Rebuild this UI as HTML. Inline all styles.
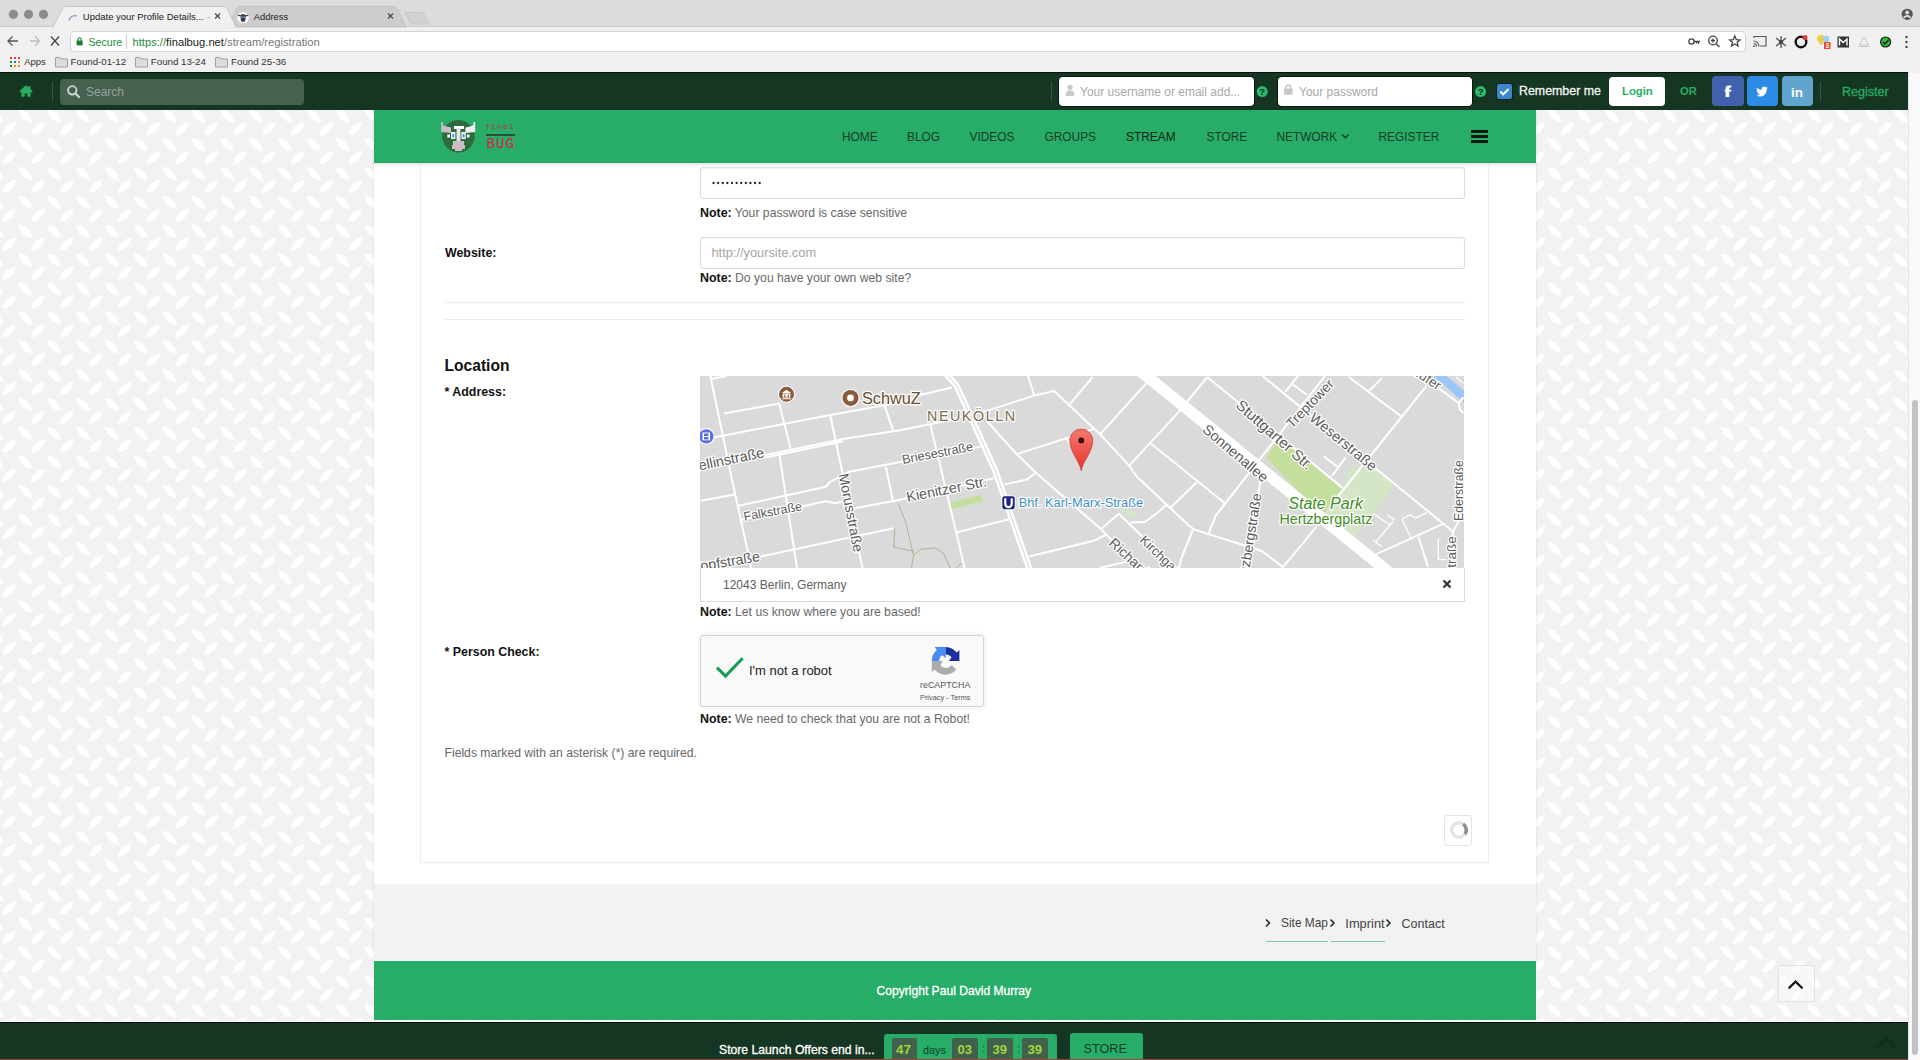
<!DOCTYPE html>
<html><head><meta charset="utf-8">
<style>
*{box-sizing:border-box;margin:0;padding:0}
html,body{width:1920px;height:1060px;overflow:hidden;background:#f2f2f2;font-family:"Liberation Sans",sans-serif}
.a{position:absolute}
.m{-webkit-text-stroke:0.3px currentColor}
.t{position:absolute;white-space:nowrap;line-height:1;transform:translateY(1.2px)}
</style></head><body>
<!-- background pattern -->
<svg class="a" style="left:0;top:0" width="1908" height="1060">
<defs>
<pattern id="pt" x="0" y="0" width="28.852" height="28.87" patternUnits="userSpaceOnUse">
<g fill="#fff">
<path id="lf1" d="M-9.7 0 Q0 -7 9.7 0 Q0 7 -9.7 0Z" transform="translate(9.2 13.2) rotate(-44)"/>
<path d="M-9.7 0 Q0 -7 9.7 0 Q0 7 -9.7 0Z" transform="translate(25.3 0.35) rotate(44)"/>
<path d="M-9.7 0 Q0 -7 9.7 0 Q0 7 -9.7 0Z" transform="translate(25.3 29.22) rotate(44)"/>
<path d="M-9.7 0 Q0 -7 9.7 0 Q0 7 -9.7 0Z" transform="translate(-3.552 0.35) rotate(44)"/>
<path d="M-9.7 0 Q0 -7 9.7 0 Q0 7 -9.7 0Z" transform="translate(-3.552 29.22) rotate(44)"/>
<path d="M-9.7 0 Q0 -7 9.7 0 Q0 7 -9.7 0Z" transform="translate(38.052 13.2) rotate(-44)"/>
</g>
</pattern>
</defs>
<rect width="1908" height="1060" fill="#f2f2f2"/>
<rect width="1908" height="1060" fill="url(#pt)"/>
</svg>

<!-- ===== Browser chrome ===== -->
<div class="a" style="left:0;top:0;width:1920px;height:27px;background:#dcdcdc"></div>
<div class="a" style="left:0;top:27px;width:1920px;height:46px;background:#f0f0f0"></div>
<div class="a" style="left:0;top:26px;width:1920px;height:1px;background:#c8c8c8"></div>
<svg class="a" style="left:0;top:0" width="440" height="28">
<circle cx="13.4" cy="14.3" r="4.6" fill="#8c8c8c"/>
<circle cx="28.5" cy="14.3" r="4.6" fill="#8c8c8c"/>
<circle cx="43.5" cy="14.3" r="4.6" fill="#8c8c8c"/>
<path d="M228 27 L237 8.5 Q238 6.5 240 6.5 L394 6.5 Q396 6.5 397 8.5 L406.5 27Z" fill="#cdcdcd" stroke="#bdbdbd" stroke-width="0.8"/>
<path d="M53 27.5 L62.5 8.5 Q63.5 6.5 65.5 6.5 L224 6.5 Q226 6.5 227 8.5 L236 27.5Z" fill="#f0f0f0"/><path d="M53 27 L62.5 8.5 Q63.5 6.5 65.5 6.5 L224 6.5 Q226 6.5 227 8.5 L236 27" fill="none" stroke="#c0c0c0" stroke-width="0.8"/>
<path d="M405 12.5 L423 12.5 L429 24 L411 24Z" fill="#d2d2d2" stroke="#c2c2c2" stroke-width="0.8"/>
<path d="M69 20.5 A6 6 0 0 1 77 16" fill="none" stroke="#8da0c0" stroke-width="1.4"/>
<path d="M215 13.5 L220 18.5 M220 13.5 L215 18.5" stroke="#444" stroke-width="1.1"/>
<path d="M388 13.5 L393 18.5 M393 13.5 L388 18.5" stroke="#444" stroke-width="1.1"/>
<circle cx="243.1" cy="17.7" r="5.6" fill="#fff"/><path d="M237.8 14.4 L240.5 15.3 L241.5 14.2 H244.7 L245.7 15.3 L248.4 14.4 L248 16 L245.6 16.6 L245.5 20 L244.6 21.8 H241.6 L240.7 20 L240.6 16.6 L238.2 16Z" fill="#3a3d42"/><circle cx="241.9" cy="17.2" r="0.9" fill="#6a90d8"/><circle cx="244.3" cy="17.2" r="0.9" fill="#6a90d8"/>
</svg>
<div class="t" style="left:82.8px;top:11.2px;font-size:9.5px;color:#222">Update your Profile Details...</div>
<div class="t" style="left:207px;top:11px;font-size:9.5px;color:#aaa">-</div>
<div class="t" style="left:253.8px;top:11.4px;font-size:9.4px;color:#222">Address</div>

<!-- toolbar -->
<svg class="a" style="left:0;top:27px" width="75" height="26">
<path d="M8 14 L18 14 M12.5 9.5 L8 14 L12.5 18.5" fill="none" stroke="#555" stroke-width="1.3"/>
<path d="M30 14 L39 14 M35 9.5 L39.5 14 L35 18.5" fill="none" stroke="#bbb" stroke-width="1.3"/>
<path d="M51 9.5 L59 18.5 M59 9.5 L51 18.5" fill="none" stroke="#444" stroke-width="1.3"/>
</svg>
<div class="a" style="left:70px;top:31px;width:1676px;height:21px;background:#fff;border:1px solid #d6d6d6;border-radius:4px"></div>
<svg class="a" style="left:1680px;top:30px" width="240" height="24">
<circle cx="1901" cy="-16" r="0" />
<g fill="none" stroke="#444" stroke-width="1.3">
<circle cx="11.5" cy="11.5" r="2.6"/><path d="M14 11.5 H20 M18.5 11.5 V14 M16.5 11.5 V13.5"/>
<circle cx="33" cy="10.5" r="4.3"/><path d="M36.2 13.7 L39.5 17 M31 10.5 H35 M33 8.5 V12.5"/>
<path d="M54.8 6 L56.3 9.6 L60 9.9 L57.2 12.3 L58.1 16 L54.8 14 L51.5 16 L52.4 12.3 L49.6 9.9 L53.3 9.6Z"/>
</g>
<g fill="none" stroke="#555" stroke-width="1.2"><path d="M74 8 V6.5 H86 V16 H80"/><path d="M73.5 11 A5.5 5.5 0 0 1 79 16.5 M73.5 13.5 A3 3 0 0 1 76.5 16.5"/></g>
<circle cx="74" cy="16.2" r="0.9" fill="#555"/>
<g stroke="#555" stroke-width="1.3"><path d="M96 8 L106 16 M106 8 L96 16 M101 6 V18"/></g><circle cx="101" cy="12" r="2.2" fill="#444"/>
<circle cx="121" cy="12" r="5.3" fill="none" stroke="#111" stroke-width="2.4"/><circle cx="125" cy="7.5" r="2.5" fill="#e23b3b"/>
<path d="M139 5.5 A4 4 0 0 1 145 10 Q143 12 143 14.5 H139.5 Q139.5 12 137 10 A4 4 0 0 1 139 5.5Z" fill="#f0d040"/><circle cx="146" cy="9" r="3.3" fill="#9fd0f0"/>
<rect x="144" y="12" width="6.5" height="7" fill="#e84a2a"/><text x="147.2" y="18.3" font-size="6.5" font-family="Liberation Sans" font-weight="bold" fill="#fff" text-anchor="middle">3</text>
<rect x="157.5" y="6.5" width="11.5" height="11" fill="#333"/><path d="M159.5 15.5 V9 L163.2 12.5 L167 9 V15.5" fill="none" stroke="#fff" stroke-width="1.4"/>
<path d="M184 7 L188.5 15 H179.5Z M178 16.5 H190" fill="none" stroke="#c8c8c8" stroke-width="1"/>
<circle cx="205.6" cy="12" r="5.6" fill="#1a1a1a"/><circle cx="205.6" cy="12" r="4.4" fill="#2fbf3a"/><path d="M203 12 L205 14 L208.5 10" fill="none" stroke="#111" stroke-width="1.3"/>
<circle cx="226.5" cy="7" r="1.2" fill="#444"/><circle cx="226.5" cy="12" r="1.2" fill="#444"/><circle cx="226.5" cy="17" r="1.2" fill="#444"/>
</svg>
<svg class="a" style="left:1895px;top:8px" width="22" height="14"><circle cx="12.2" cy="6.3" r="5.6" fill="#555"/><circle cx="12.2" cy="4.6" r="2" fill="#dcdcdc"/><path d="M8.6 9.8 Q12.2 6.3 15.8 9.8" fill="none" stroke="#dcdcdc" stroke-width="1.8"/></svg>
<svg class="a" style="left:75px;top:36px" width="10" height="11"><rect x="1.6" y="4.6" width="6" height="4.8" fill="#1a7f2e"/><path d="M3 5 V3.4 A1.6 1.6 0 0 1 6.2 3.4 V5" fill="none" stroke="#1a7f2e" stroke-width="1.1"/></svg>
<div class="t" style="left:88.5px;top:36px;font-size:10.6px;color:#1e8a3a">Secure</div>
<div class="a" style="left:126px;top:34px;width:1px;height:15px;background:#ccc"></div>
<div class="t" style="left:132.5px;top:36px;font-size:11.2px;color:#777"><span style="color:#1e8a3a">https://</span><span style="color:#222">finalbug.net</span>/stream/registration</div>

<!-- bookmarks -->

<svg class="a" style="left:9px;top:56px" width="12" height="12">
<g><rect x="1" y="1" width="2" height="2" fill="#e53935"/><rect x="5" y="1" width="2" height="2" fill="#e53935"/><rect x="9" y="1" width="2" height="2" fill="#e53935"/>
<rect x="1" y="5" width="2" height="2" fill="#2e7d32"/><rect x="5" y="5" width="2" height="2" fill="#1e6fe0"/><rect x="9" y="5" width="2" height="2" fill="#ef8c1a"/>
<rect x="1" y="9" width="2" height="2" fill="#2e7d32"/><rect x="5" y="9" width="2" height="2" fill="#ef8c1a"/><rect x="9" y="9" width="2" height="2" fill="#ef8c1a"/></g></svg>
<div class="t" style="left:24.2px;top:56px;font-size:9.5px;color:#333">Apps</div>
<svg class="a" style="left:55px;top:56px" width="14" height="12"><path d="M0.5 1.5 H5 L6 3 H12.5 V11 H0.5Z" fill="#dcdcdc" stroke="#9a9a9a" stroke-width="0.9"/></svg>
<div class="t" style="left:70.6px;top:56px;font-size:9.7px;color:#333">Found-01-12</div>
<svg class="a" style="left:135px;top:56px" width="14" height="12"><path d="M0.5 1.5 H5 L6 3 H12.5 V11 H0.5Z" fill="#dcdcdc" stroke="#9a9a9a" stroke-width="0.9"/></svg>
<div class="t" style="left:150.8px;top:56px;font-size:9.73px;color:#333">Found 13-24</div>
<svg class="a" style="left:215px;top:56px" width="14" height="12"><path d="M0.5 1.5 H5 L6 3 H12.5 V11 H0.5Z" fill="#dcdcdc" stroke="#9a9a9a" stroke-width="0.9"/></svg>
<div class="t" style="left:231px;top:56px;font-size:9.75px;color:#333">Found 25-36</div>

<!-- ===== Top dark bar ===== -->
<div class="a" style="left:0;top:72px;width:1908px;height:38px;background:#163624;border-top:1px solid #051208"></div>

<!-- ===== Container ===== -->
<div class="a" style="left:374px;top:110px;width:1162px;height:53px;background:#27ad67;box-shadow:0 0 2px 1px rgba(0,0,0,0.06)"></div>
<div class="a" style="left:374px;top:163px;width:1162px;height:722px;background:#fff;box-shadow:0 0 2px 1px rgba(0,0,0,0.06)"></div>
<div class="a" style="left:420px;top:163px;width:1069px;height:700px;border:1px solid #ececec;border-top:none"></div>
<div class="a" style="left:374px;top:885px;width:1162px;height:76px;background:#f2f2f2;box-shadow:0 0 2px 1px rgba(0,0,0,0.06)"></div>
<div class="a" style="left:374px;top:961px;width:1162px;height:59px;background:#27ad67"></div>


<!-- top bar contents -->
<svg class="a" style="left:18px;top:84px" width="16" height="14"><path d="M8 1.2 L1.2 7.2 L2.6 8.4 L3.4 7.8 V12.8 H6.6 V9.6 H9.4 V12.8 H12.6 V7.8 L13.4 8.4 L14.8 7.2 L12.4 5.1 V2 H10.6 V3.5Z" fill="#27ae60"/></svg>
<div class="a" style="left:52px;top:82px;width:1px;height:19px;background:#3b5544"></div>
<div class="a" style="left:60px;top:79px;width:244px;height:26px;background:#476151;border-radius:4px"></div>
<svg class="a" style="left:66px;top:84px" width="16" height="16"><circle cx="6.3" cy="6.3" r="4.2" fill="none" stroke="#cfd6d1" stroke-width="1.9"/><path d="M9.3 9.3 L13 13" stroke="#cfd6d1" stroke-width="2.2" stroke-linecap="round"/></svg>
<div class="t" style="left:86px;top:85px;font-size:12px;color:#98a59c">Search</div>

<div class="a" style="left:1051px;top:82px;width:1px;height:19px;background:#3b5544"></div>
<div class="a" style="left:1059px;top:77px;width:195px;height:29px;background:#fff;border-radius:4px;box-shadow:0 0 0 1px #061a0c"></div>
<svg class="a" style="left:1065px;top:84px" width="12" height="13"><circle cx="5" cy="3.3" r="2.6" fill="#c8c8c8"/><path d="M0.8 12 Q0.6 7 3 6.5 L7 6.5 Q9.4 7 9.2 12Z" fill="#c8c8c8"/></svg>
<div class="t" style="left:1080px;top:85px;font-size:12px;color:#a8a8a8">Your username or email add...</div>
<svg class="a" style="left:1256px;top:85px" width="13" height="13"><circle cx="6.2" cy="6.6" r="5.5" fill="#2dba6a"/><text x="6.2" y="10.4" font-family="Liberation Sans" font-weight="bold" font-size="9.5" text-anchor="middle" fill="#10261a">?</text></svg>
<div class="a" style="left:1278px;top:77px;width:194px;height:29px;background:#fff;border-radius:4px;box-shadow:0 0 0 1px #061a0c"></div>
<svg class="a" style="left:1283px;top:84px" width="11" height="12"><rect x="1" y="4.5" width="8.6" height="6.3" fill="#c8c8c8"/><path d="M2.8 5 V3.6 A2.5 2.5 0 0 1 7.8 3.6 V5" fill="none" stroke="#c8c8c8" stroke-width="1.5"/></svg>
<div class="t" style="left:1299px;top:85px;font-size:12px;color:#a8a8a8">Your password</div>
<svg class="a" style="left:1474px;top:85px" width="13" height="13"><circle cx="6.6" cy="6.6" r="5.5" fill="#2dba6a"/><text x="6.6" y="10.4" font-family="Liberation Sans" font-weight="bold" font-size="9.5" text-anchor="middle" fill="#10261a">?</text></svg>
<div class="a" style="left:1497px;top:84px;width:15px;height:15px;background:#3d85d0;border-radius:2px;box-shadow:0 0 0 1px #0b2412"></div>
<svg class="a" style="left:1497px;top:84px" width="15" height="15"><path d="M3.3 7.6 L6.2 10.4 L11.6 5" fill="none" stroke="#fff" stroke-width="2.1"/></svg>
<div class="t m" style="left:1519px;top:84px;font-size:12.4px;color:#f4f4f4">Remember me</div>
<div class="a" style="left:1609px;top:77px;width:56px;height:29px;background:#fff;border-radius:4px"></div>
<div class="t" style="left:1622px;top:85px;font-size:11.3px;font-weight:bold;color:#27ae60">Login</div>
<div class="t" style="left:1680px;top:85px;font-size:11.2px;font-weight:bold;color:#27ae60">OR</div>
<div class="a" style="left:1712px;top:76px;width:32px;height:30px;background:#4261ac;border-radius:4px"></div>
<svg class="a" style="left:1720px;top:82px" width="16" height="18"><path d="M5.6 15 V9.6 H4.6 V7.8 H5.6 V6.4 Q5.6 3.4 8.6 3.4 Q10.5 3.4 11.4 3.6 V5.6 H9.9 Q9.3 5.6 9.3 6.3 V7.8 H11.4 V9.6 H9.3 V15Z" fill="#fff"/></svg>
<div class="a" style="left:1747px;top:76px;width:31px;height:30px;background:#2d8be6;border-radius:4px"></div>
<svg class="a" style="left:1756.4px;top:85.6px" width="13" height="11" viewBox="0 0 17 14"><path d="M15.5 2.2 Q14.8 2.6 13.8 2.7 Q14.9 2 15.2 0.9 Q14.2 1.5 13.1 1.7 Q12.1 0.6 10.6 0.6 Q7.4 0.8 7.2 4.1 Q7.2 4.5 7.3 4.9 Q3.5 4.7 1.1 1.8 Q0.2 3.9 2.1 5.7 Q1.4 5.7 0.8 5.3 Q0.9 7.9 3.5 8.6 Q2.8 8.8 2 8.6 Q2.9 10.8 5.2 10.9 Q3 12.6 0.3 12.3 Q2.6 13.7 5.5 13.7 Q12.4 13.5 13.8 6.4 Q13.9 5.4 13.9 3.7 Q14.9 3 15.5 2.2Z" fill="#fff"/></svg>
<div class="a" style="left:1782px;top:76px;width:31px;height:30px;background:#5fa5cd;border-radius:4px"></div>
<div class="t" style="left:1791px;top:85px;font-size:13.5px;font-weight:bold;color:#fff">in</div>
<div class="a" style="left:1820px;top:82px;width:1px;height:19px;background:#3b5544"></div>
<div class="t m" style="left:1842px;top:85px;font-size:12.5px;color:#27ae60">Register</div>

<!-- green header -->
<svg class="a" style="left:438px;top:117px" width="40" height="40">
<circle cx="20.4" cy="19.2" r="16.2" fill="#2e6b3c"/>
<path d="M3.2 5 L5 5 L5 8 L8.5 9.5 L13 10.5 L13 16 L3.2 15Z" fill="#c8bfc6"/>
<path d="M37.2 5 L35.4 5 L35.4 8 L31.9 9.5 L27.4 10.5 L27.4 16 L37.2 15Z" fill="#f0eef0"/>
<rect x="16" y="9" width="10" height="3" fill="#fff"/>
<rect x="18.5" y="11" width="4" height="13" fill="#e8e4e8"/>
<path d="M15 24 H26 V28 H27 V32 H24 V34 H17 V32 H14 V28 H15Z" fill="#c9bcc6"/>
<rect x="13" y="15" width="4.4" height="7" fill="#e8f2ff"/><rect x="14.3" y="17" width="1.8" height="3.4" fill="#4a90e2"/>
<rect x="23.4" y="15" width="4.4" height="7" fill="#e8f2ff"/><rect x="24.7" y="17" width="1.8" height="3.4" fill="#4a90e2"/>
<rect x="9.3" y="17.5" width="2.6" height="3" fill="#fff"/><rect x="28.9" y="17.5" width="2.6" height="3" fill="#fff"/>
</svg>
<div class="t" style="left:485.5px;top:121.5px;font-size:8px;font-family:'Liberation Mono',monospace;color:#b83848;letter-spacing:1px">final</div>
<div class="a" style="left:486px;top:134px;width:29px;height:2px;background:#2e4d3a"></div>
<div class="t" style="left:486.5px;top:135.5px;font-size:14px;font-family:'Liberation Mono',monospace;color:#d41f4a;letter-spacing:1.1px">BUG</div>

<div class="t" style="left:842px;top:131px;font-size:11.9px;color:#163d27">HOME</div>
<div class="t" style="left:907px;top:131px;font-size:11.9px;color:#163d27">BLOG</div>
<div class="t" style="left:969.5px;top:131px;font-size:11.9px;color:#163d27">VIDEOS</div>
<div class="t" style="left:1044.5px;top:131px;font-size:11.9px;color:#163d27">GROUPS</div>
<div class="t" style="left:1126px;top:131px;font-size:11.9px;color:#0c1f14">STREAM</div>
<div class="t" style="left:1206.5px;top:131px;font-size:11.9px;color:#163d27">STORE</div>
<div class="t" style="left:1276.5px;top:131px;font-size:11.9px;color:#163d27">NETWORK</div>
<svg class="a" style="left:1341px;top:133px" width="9" height="7"><path d="M1 1.5 L4.3 4.8 L7.6 1.5" fill="none" stroke="#163d27" stroke-width="1.4"/></svg>
<div class="t" style="left:1378.5px;top:131px;font-size:11.9px;color:#163d27">REGISTER</div>
<div class="a" style="left:1471px;top:130px;width:16.5px;height:2.8px;background:#0c1a12"></div>
<div class="a" style="left:1471px;top:135px;width:16.5px;height:2.8px;background:#0c1a12"></div>
<div class="a" style="left:1471px;top:140px;width:16.5px;height:2.8px;background:#0c1a12"></div>


<!-- header shadow -->
<div class="a" style="left:374px;top:163px;width:1162px;height:4px;background:linear-gradient(#e6e6e6,rgba(255,255,255,0))"></div>
<!-- form -->
<div class="a" style="left:700px;top:167px;width:765px;height:32px;background:#fff;border:1px solid #dcdcdc;border-radius:3px;box-shadow:inset 0 1px 1px rgba(0,0,0,0.06)"></div>
<svg class="a" style="left:711.5px;top:180.5px" width="52" height="4" fill="#222"><circle cx="1.50" cy="2" r="1.15"/><circle cx="6.12" cy="2" r="1.15"/><circle cx="10.74" cy="2" r="1.15"/><circle cx="15.36" cy="2" r="1.15"/><circle cx="19.98" cy="2" r="1.15"/><circle cx="24.60" cy="2" r="1.15"/><circle cx="29.22" cy="2" r="1.15"/><circle cx="33.84" cy="2" r="1.15"/><circle cx="38.46" cy="2" r="1.15"/><circle cx="43.08" cy="2" r="1.15"/><circle cx="47.70" cy="2" r="1.15"/></svg>
<div class="t" style="left:700px;top:206px;font-size:12.2px;color:#686868"><b style="color:#111;font-size:12.4px">Note:</b> Your password is case sensitive</div>
<div class="t" style="left:445px;top:246px;font-size:12.4px;font-weight:bold;color:#111">Website:</div>
<div class="a" style="left:700px;top:237px;width:765px;height:32px;background:#fff;border:1px solid #dcdcdc;border-radius:3px;box-shadow:inset 0 1px 1px rgba(0,0,0,0.06)"></div>
<div class="t" style="left:711.5px;top:246px;font-size:12.8px;color:#a3a3a3">http://yoursite.com</div>
<div class="t" style="left:700px;top:271px;font-size:12.2px;color:#686868"><b style="color:#111;font-size:12.4px">Note:</b> Do you have your own web site?</div>
<div class="a" style="left:445px;top:302px;width:1020px;height:1px;background:#ececec"></div>
<div class="a" style="left:445px;top:319px;width:1020px;height:1px;background:#ececec"></div>
<div class="t" style="left:444.5px;top:357px;font-size:15.6px;font-weight:bold;color:#111">Location</div>
<div class="t" style="left:444.5px;top:385px;font-size:12.4px;font-weight:bold;color:#111">* Address:</div>
<!--MAP-->
<svg class="a" style="left:700px;top:376px" width="764" height="192" viewBox="0 0 764 192">
<defs><linearGradient id="pg" x1="0" y1="0" x2="0" y2="1"><stop offset="0" stop-color="#f47a70"/><stop offset="1" stop-color="#e5332a"/></linearGradient><clipPath id="mc"><rect width="764" height="192"/></clipPath></defs>
<g clip-path="url(#mc)">
<rect width="764" height="192" fill="#dadada"/>
<!-- parks -->
<path d="M566 81.5 L576 67 L590.8 71 L641.5 112.75 L622 139.8 Z" fill="#c4df9b"/>
<path d="M651 91 L676.9 94 L694.6 109.6 L655 160.7 L624.8 137.75 L639.4 119 Z" fill="#d5e6c7"/>
<path d="M249 127.3 L280.2 119 L283.3 125.25 L251 133.6Z" fill="#c4df9b"/>
<path d="M420.8 132.5 L437.5 136.7 L432.3 143 L423 135.7Z" fill="#d3e6c5"/>
<path d="M733.5 0 L746.7 0 L764 14.5 L764 19.8 L759.3 23 L752.7 16.5 Z M762 24.5 L764 23 L764 27Z" fill="#9cc6f7"/>
<!-- brown paths -->
<g fill="none" stroke="#b3a98a" stroke-width="0.9">
<path d="M198.3 127.3 L206.25 148.2 L213.5 179.4 L211.5 192"/>
<path d="M194.8 152.3 L193.75 171.1 L213.5 175.25"/>
<path d="M213.5 179.4 L220.8 173.2 L235.4 172.1 L243.75 177.3 L250 192"/>
<path d="M256.25 192 L262.5 186.7"/>
</g>
<!-- streets -->
<g fill="none" stroke="#fff" stroke-width="2" stroke-linejoin="round">
<path d="M10.4 0 L31.2 100 L47.9 176 L51 192"/>
<path d="M11.5 3.1 L27 0"/>
<path d="M24 37.5 L79.2 27.6 L91.7 77"/>
<path d="M79.2 77 L97 192"/>
<path d="M13.5 61.5 L130.2 39 L200 26.6 L220.8 18.75 L252 11.5"/>
<path d="M130.2 39 L162.5 192"/>
<path d="M183.75 27.3 L193.1 54.4"/>
<path d="M185.8 90.9 L193 125"/>
<path d="M230.2 47.9 L256.25 156.5 L264.6 192"/>
<path d="M0 94 L64.6 79.2 L145.8 62.5 L200 54.2 L241.7 45.8 L288.5 34.4 L333.3 19.8 L354.2 15.1"/>
<path d="M64.6 81.8 L143 65.3"/>
<path d="M1 124.7 L34.4 118.5"/>
<path d="M37.5 130 L126 110.7 L130 106 L148 96 L280.2 70.8"/>
<path d="M40.6 144 L126 125.25 L135.4 127.3 L145 125"/>
<path d="M148 133.6 L200 123.7 L293.75 102.3"/>
<path d="M304.2 108.6 L327 103.4 L335.4 97.1"/>
<path d="M316.7 78.1 L368.75 61.5 L392.7 53.1"/>
<path d="M60.4 180.5 L193.75 152.3"/>
<path d="M256.25 156.5 L310.4 143"/>
<path d="M329.2 180.5 L393.75 164.8 L406.25 158.6"/>
<path d="M328 0 L334.4 19.8"/>
<path d="M354.2 15.1 L400 58.3 L429.2 89.6 L436.5 100.25 L488.5 149.2 L493.75 153.4 L562.5 175.25 L583.3 191.5"/>
<path d="M369.8 28.1 L392.7 1"/>
<path d="M400 58.3 L445.8 7.8 L454 0"/>
<path d="M287.5 45.8 L316.7 78.1 L339.6 100 L400 152.3 L439.6 192"/>
<path d="M366.7 62.5 L379.2 83.3"/>
<path d="M429.2 89.6 L479.2 35.4 L507.3 1"/>
<path d="M507.3 1 L642.5 111.7"/>
<path d="M451 67.7 L525 127.3"/>
<path d="M496.9 106 L470.8 131.5 L465.6 129.4 L456.25 137.75 L444.8 146 L430.2 146.6"/>
<path d="M562.5 0 L752.9 155.5"/>
<path d="M585.4 15.6 L598 0"/>
<path d="M625 0 L549 97.1 L515.6 139.8 L508.3 158.6"/>
<path d="M648.75 1 L700.8 40.1"/>
<path d="M668 15.6 L681.6 2.6"/>
<path d="M726.9 9.4 L638.3 120"/>
<path d="M736.25 10.4 L758.6 27 L763.2 21.7 M758.6 27 L759.9 33.6 L763.5 36.9"/>
<path d="M592.5 8.3 L607 18.75"/>
<path d="M623.75 80.2 L637.3 90.6"/>
<path d="M645.6 81.25 L632 100"/>
<path d="M561.5 100.25 L558.3 117 L546.9 192"/>
<path d="M492.7 154.4 L481.25 182.5 L479.2 192"/>
<path d="M402 152.3 L418.75 137.75 L443.75 161.7 L476 192"/>
<path d="M400 192 L426 185.7"/>
<path d="M583 190.9 L600.8 170 L616.5 150.25"/>
<path d="M675.8 178.4 L742.5 148.2"/>
<path d="M718.5 160.7 L727.9 190.9"/>
<path d="M752.9 155.5 L758.75 145 L763 130"/>
<path d="M752.9 155.5 L754 165 L753 192"/>
</g>
<g fill="none" stroke="#fff" stroke-width="1.3">
<path d="M673.75 137.75 L690.4 149.2"/>
<path d="M672.7 163.8 L682.1 171.1"/>
<path d="M675.8 165.9 L693.5 145"/>
<path d="M687.3 138.8 L694.6 144"/>
<path d="M701.9 143 L711.25 162.75"/>
<path d="M701.9 143 L710.2 138.8 L715.4 141.9 L726.9 136.7"/>
<path d="M738.3 162.75 L738.3 183.6 L746.7 183.6"/>
<path d="M756 1 L763.3 7.3"/>
</g>
<!-- Karl-Marx double road -->
<path d="M246 -2 L256.5 9.4 L295 94 L329.8 194" fill="none" stroke="#fff" stroke-width="6.2"/>
<path d="M246 -2 L256.5 9.4 L295 94 L329.8 194" fill="none" stroke="#d4d4d4" stroke-width="1"/>
<!-- Sonnenallee wide -->
<path d="M434.2 -10 L695.8 202" fill="none" stroke="#fff" stroke-width="11.5"/>
<!-- labels -->
<g font-family="Liberation Sans" fill="#5a5a5a" stroke="#fff" stroke-width="2.5" paint-order="stroke" stroke-linejoin="round">
<text x="0" y="0" font-size="14.5" transform="translate(-0.5 94.5) rotate(-11.6)">ellinstraße</text>
<text x="0" y="0" font-size="12.7" transform="translate(203 88) rotate(-10.8)">Briesestraße</text>
<text x="0" y="0" font-size="14.4" transform="translate(207.5 126) rotate(-11.4)">Kienitzer Str.</text>
<text x="0" y="0" font-size="12.5" transform="translate(44.5 145) rotate(-10.6)">Falkstraße</text>
<text x="0" y="0" font-size="14.2" transform="translate(-8 196.5) rotate(-9.6)">Kopfstraße</text>
<text x="0" y="0" font-size="14.2" transform="translate(138.5 98.5) rotate(79)">Morusstraße</text>
<text x="0" y="0" font-size="14.5" transform="translate(501.5 55) rotate(40.2)">Sonnenallee</text>
<text x="0" y="0" font-size="15" transform="translate(535 30.5) rotate(41.5)">Stuttgarter Str.</text>
<text x="0" y="0" font-size="13.8" transform="translate(592 53) rotate(-46)">Treptower</text>
<text x="0" y="0" font-size="14.4" transform="translate(608.5 43.5) rotate(39.5)">Weserstraße</text>
<text x="0" y="0" font-size="14" text-anchor="end" transform="translate(561.5 118) rotate(-81)">Hertzbergstraße</text>
<text x="0" y="0" font-size="14" transform="translate(555 187) rotate(-74.8)" text-anchor="start" visibility="hidden">x</text>
<text x="0" y="0" font-size="14" transform="translate(408 168) rotate(43)">Richardstraße</text>
<text x="0" y="0" font-size="13" transform="translate(439 165) rotate(44)">Kirchgasse</text>
<text x="0" y="0" font-size="12.3" transform="translate(763 145) rotate(-90)">Ederstraße</text>
<text x="0" y="0" font-size="13.5" transform="translate(756 227) rotate(-90)">Ederstraße</text>
<text x="0" y="0" font-size="13.5" transform="translate(737.5 14.5) rotate(33)" text-anchor="end">Weigandufer</text>
</g>
<g font-family="Liberation Sans" stroke="#fff" stroke-width="2.5" paint-order="stroke" stroke-linejoin="round">
<text x="162" y="28" font-size="16.3" fill="#6b4a2c">SchwuZ</text>
<text x="227" y="44.8" font-size="14.3" letter-spacing="1.56" fill="#7a6b4a">NEUKÖLLN</text>
<text x="318.7" y="131" font-size="12.8" fill="#3b8fc9">Bhf. Karl-Marx-Straße</text>
<text x="588.3" y="133" font-size="16" font-style="italic" fill="#3e8e22">State Park</text>
<text x="579.4" y="148.2" font-size="14.3" fill="#3e8e22">Hertzbergplatz</text>
</g>
<!-- POI icons -->
<circle cx="86.5" cy="18.2" r="8.6" fill="#fff" opacity="0.9"/>
<circle cx="86.5" cy="18.2" r="7.5" fill="#8b5a3c"/>
<path d="M82 17 L86.5 13.8 L91 17 Z M82.6 17.5 H90.4 V21.6 H82.6Z M81.8 22.2 H91.2 V23.2 H81.8Z" fill="#fff"/>
<rect x="84.2" y="18.5" width="1.2" height="2.5" fill="#8b5a3c"/><rect x="87.6" y="18.5" width="1.2" height="2.5" fill="#8b5a3c"/>
<circle cx="150.5" cy="21.9" r="9.2" fill="#fff" opacity="0.9"/>
<circle cx="150.5" cy="21.9" r="8" fill="#8b5a3c"/>
<circle cx="150.5" cy="21.9" r="3.4" fill="#fff"/>
<circle cx="6.25" cy="60.4" r="8.3" fill="#fff" opacity="0.9"/>
<circle cx="6.25" cy="60.4" r="7.2" fill="#5b6fe3"/>
<path d="M2.5 56.5 H10 V64.3 H2.5Z" fill="#fff"/>
<rect x="4" y="57.5" width="4.5" height="2.5" fill="#5b6fe3"/><rect x="4" y="61" width="4.5" height="2.5" fill="#5b6fe3"/>
<!-- U-Bahn -->
<rect x="301.5" y="119.5" width="14" height="14.5" rx="2.8" fill="#fff"/>
<rect x="302.3" y="120.3" width="12.4" height="12.9" rx="2.2" fill="#1a2380"/>
<path d="M305.3 122.3 V128 A3.2 3.2 0 0 0 311.7 128 V122.3" fill="none" stroke="#fff" stroke-width="2.2"/>
<!-- pin -->
<path d="M381.25 94.8 C380.2 86 369.75 76 369.75 64.6 A11.5 11.5 0 0 1 392.75 64.6 C392.75 76 382.3 86 381.25 94.8Z" fill="url(#pg)" stroke="#c5221f" stroke-width="0.6"/>
<circle cx="381.25" cy="64.4" r="2.9" fill="#3b0b0b"/>
</g>
</svg>
<!--/MAP-->
<div class="a" style="left:700px;top:568px;width:765px;height:34px;background:#fff;border:1px solid #dadada;border-top:none"></div>
<div class="t" style="left:723px;top:578px;font-size:12px;color:#606060">12043 Berlin, Germany</div>
<svg class="a" style="left:1442px;top:579px" width="10" height="10"><path d="M1.5 1.5 L8.5 8.5 M8.5 1.5 L1.5 8.5" stroke="#333" stroke-width="2.2"/></svg>
<div class="t" style="left:700px;top:604.5px;font-size:12.2px;color:#686868"><b style="color:#111;font-size:12.4px">Note:</b> Let us know where you are based!</div>
<div class="t" style="left:444.5px;top:645px;font-size:12.4px;font-weight:bold;color:#111">* Person Check:</div>
<!-- recaptcha -->
<div class="a" style="left:700px;top:635px;width:284px;height:72px;background:#f9f9f9;border:1px solid #d3d3d3;border-radius:3px;box-shadow:0 0 4px 1px rgba(0,0,0,0.08)"></div>
<svg class="a" style="left:714px;top:654px" width="32" height="26"><path d="M3 13.6 L11.5 22 L28.6 4.2" fill="none" stroke="#169c53" stroke-width="3"/></svg>
<div class="t" style="left:749px;top:663px;font-size:13px;color:#222">I'm not a robot</div>
<svg class="a" style="left:925px;top:642px" width="40" height="38">
<path d="M6.8 19 A14 14 0 0 1 11.8 7.9 L9.7 5 L20.8 5 L20.8 16.1 L17.2 13.3 A6.5 6.5 0 0 0 14.3 19 Z" fill="#4a8af4"/>
<path d="M20.8 5 A14 14 0 0 1 31.5 10.6 L34.4 8.2 L34.4 19 L23.7 19 L26.5 15.4 A6.5 6.5 0 0 0 20.8 12.4 Z" fill="#1c2fa0"/>
<path d="M6.8 19 L17.9 19 L15.4 22.9 A6.5 6.5 0 0 0 26.5 22.9 L31.2 27.6 A14 14 0 0 1 9.7 27.6 L6.8 30.1 Z" fill="#ababab"/>
</svg>
<div class="t" style="left:920px;top:680px;font-size:8.9px;color:#555">reCAPTCHA</div>
<div class="t" style="left:920px;top:693px;font-size:7.35px;color:#555">Privacy - Terms</div>
<div class="t" style="left:700px;top:712px;font-size:12.2px;color:#686868"><b style="color:#111;font-size:12.4px">Note:</b> We need to check that you are not a Robot!</div>
<div class="t" style="left:444.5px;top:745.5px;font-size:12.18px;color:#686868">Fields marked with an asterisk (*) are required.</div>
<!-- spinner -->
<div class="a" style="left:1444px;top:815px;width:28px;height:31px;background:#fff;border:1px solid #e4e4e4;border-radius:3px"></div>
<svg class="a" style="left:1448.7px;top:820.4px" width="20" height="20"><circle cx="10" cy="10" r="7.3" fill="none" stroke="#e3e3e3" stroke-width="3.4"/><path d="M14.19 4.02 A7.3 7.3 0 0 1 15.98 14.19" fill="none" stroke="#8c8c8c" stroke-width="3.4"/></svg>

<!-- footer links -->
<svg class="a" style="left:1264px;top:918px" width="8" height="10"><path d="M2 1.5 L5.5 5 L2 8.5" fill="none" stroke="#222" stroke-width="1.5"/></svg>
<div class="t" style="left:1281px;top:917px;font-size:11.9px;color:#444">Site Map</div>
<svg class="a" style="left:1329px;top:918px" width="8" height="10"><path d="M1.5 1.5 L5 5 L1.5 8.5" fill="none" stroke="#222" stroke-width="1.5"/></svg>
<div class="t" style="left:1345.3px;top:917px;font-size:12.9px;color:#444">Imprint</div>
<svg class="a" style="left:1385px;top:918px" width="8" height="10"><path d="M1.5 1.5 L5 5 L1.5 8.5" fill="none" stroke="#222" stroke-width="1.5"/></svg>
<div class="t" style="left:1401.6px;top:917px;font-size:12.5px;color:#444">Contact</div>
<div class="a" style="left:1266px;top:941px;width:62px;height:1px;background:#86c9a0"></div>
<div class="a" style="left:1331px;top:941px;width:54px;height:1px;background:#86c9a0"></div>

<div class="t m" style="left:876.5px;top:984px;font-size:12.1px;color:#fff">Copyright Paul David Murray</div>

<!-- ===== Bottom bar ===== -->
<div class="a" style="left:0;top:1021px;width:1908px;height:1px;background:#fff"></div><div class="a" style="left:0;top:1022px;width:1908px;height:38px;background:#163624;border-top:1px solid #050f08"></div>


<div class="t m" style="left:719px;top:1042.5px;font-size:12.2px;color:#fff">Store Launch Offers end in...</div>
<div class="a" style="left:884px;top:1034px;width:173px;height:30px;background:#27ad67;border-radius:3px"></div>
<div class="a" style="left:892px;top:1038px;width:25px;height:26px;background:#42614c;border-radius:2px"></div>
<div class="t" style="left:896px;top:1042px;font-size:13.4px;font-weight:bold;color:#a5d43c">47</div>
<div class="t" style="left:923px;top:1044px;font-size:10.8px;color:#163d27">days</div>
<div class="a" style="left:952px;top:1038px;width:26px;height:26px;background:#42614c;border-radius:2px"></div>
<div class="t" style="left:957.5px;top:1042px;font-size:13px;font-weight:bold;color:#a5d43c">03</div>
<div class="t" style="left:982px;top:1043px;font-size:10px;color:#163d27">:</div>
<div class="a" style="left:987px;top:1038px;width:26px;height:26px;background:#42614c;border-radius:2px"></div>
<div class="t" style="left:992.5px;top:1042px;font-size:13px;font-weight:bold;color:#a5d43c">39</div>
<div class="t" style="left:1017px;top:1043px;font-size:10px;color:#163d27">:</div>
<div class="a" style="left:1022px;top:1038px;width:26px;height:26px;background:#42614c;border-radius:2px"></div>
<div class="t" style="left:1027.5px;top:1042px;font-size:13px;font-weight:bold;color:#a5d43c">39</div>
<div class="a" style="left:1069.5px;top:1033px;width:73px;height:30px;background:#27ad67;border-radius:3px"></div>
<div class="t" style="left:1083.5px;top:1041.5px;font-size:12.7px;color:#163d27">STORE</div>
<svg class="a" style="left:1874px;top:1034px" width="24" height="16"><path d="M3 13 L12 4 L21 13" fill="none" stroke="#112e1c" stroke-width="4" stroke-linecap="round"/></svg>
<div class="a" style="left:0;top:1059px;width:1908px;height:1px;background:#a04040"></div>
<!-- scroll top -->
<div class="a" style="left:1777.5px;top:965px;width:37px;height:37px;background:rgba(250,250,250,0.6);border:1px solid #e2e2e2"></div>
<svg class="a" style="left:1786px;top:976px" width="20" height="16"><path d="M3.3 11.8 L9.6 5.6 L15.9 11.8" fill="none" stroke="#111" stroke-width="2.2" stroke-linecap="round"/></svg>

<!-- scrollbar -->
<div class="a" style="left:1908px;top:73px;width:12px;height:987px;background:#f9f9f9;border-left:1px solid #e6e6e6"></div>
<div class="a" style="left:1912px;top:400px;width:6px;height:655px;background:#c2c2c2;border-radius:3px"></div>
</body></html>
